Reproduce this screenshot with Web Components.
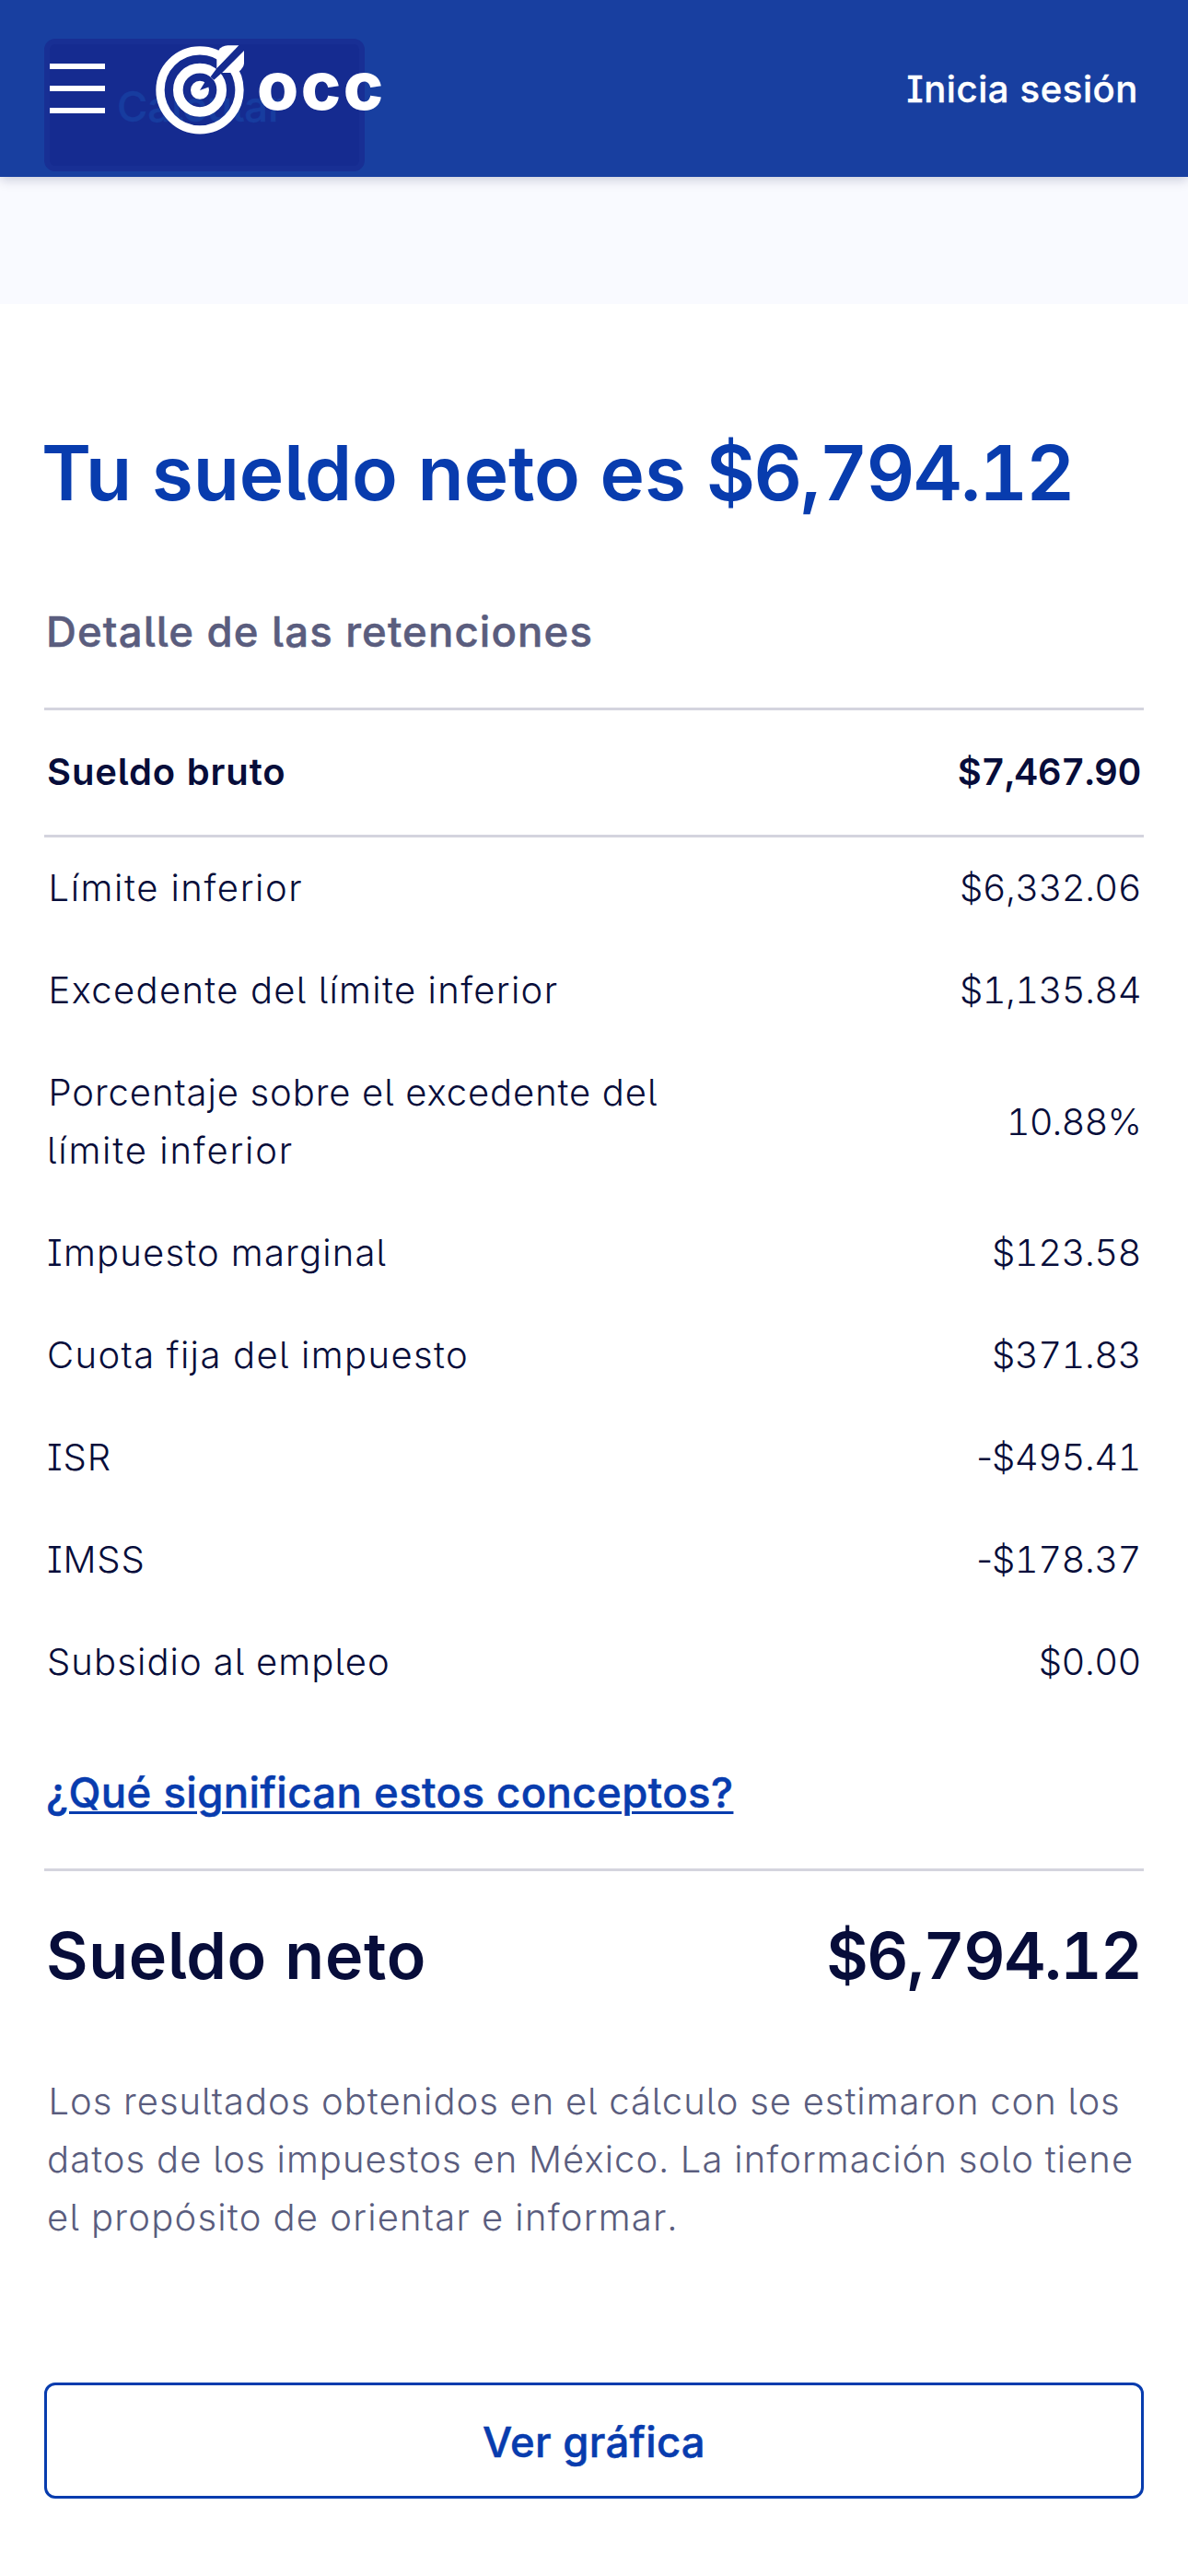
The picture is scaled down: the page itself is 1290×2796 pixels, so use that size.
<!DOCTYPE html>
<html lang="es">
<head>
<meta charset="utf-8">
<title>Calculadora de sueldo neto</title>
<style>
  body { margin: 0; background: #fff; color: #070d3a; font-family: Inter, "Liberation Sans", sans-serif; font-feature-settings: 'cv05', 'cv08', 'tnum'; }
</style>
</head>
<body>
<site-header></site-header>
<salary-page></salary-page>

<script>
const define = (name, html, setup) => customElements.define(name, class extends HTMLElement {
  connectedCallback() {
    if (this.shadowRoot) return;
    this.attachShadow({ mode: 'open' }).innerHTML = html;
    if (setup) setup(this);
  }
});
const applyTracking = el => {
  if (el.hasAttribute('track')) el.style.letterSpacing = el.getAttribute('track') + 'px';
};

define('t-text', `<style>:host{display:inline-block;white-space:nowrap}:host([indent]){padding-left:1.500px}:host([minus])::first-letter{letter-spacing:-5px}</style><slot></slot>`, applyTracking);

define('menu-icon', `<style>:host{display:block;width:60px;height:54px}svg{display:block}</style>
<svg width="60" height="54" fill="#fff"><path d="M0 0h60v6H0zM0 24h60v6H0zM0 48h60v6H0z"/></svg>`);

define('brand-logo', `<style>
  :host{display:flex;align-items:center;color:#fff}
  svg{display:block;margin-top:3px}
  span{font-weight:800;font-size:73px;line-height:80px;letter-spacing:2.6px;margin:-6px 0 0 -1px;white-space:nowrap}
</style>
<svg width="120" height="115" viewBox="0 0 360 345">
  <mask id="m" maskUnits="userSpaceOnUse" x="0" y="0" width="360" height="345">
    <rect width="360" height="345" fill="#fff"/>
    <path fill="#000" d="M298 28 226 103 206 130 217 140 243 117 315 45V20H298zM171 174 188 146 210 160z"/>
  </mask>
  <g mask="url(#m)">
    <g fill="none" stroke="#fff"><circle cx="171" cy="173.500" r="129" stroke-width="28"/><circle cx="171" cy="173.500" r="71" stroke-width="32"/></g>
    <circle cx="171" cy="173.500" r="30" fill="#fff"/>
    <g fill="#fff"><path d="M226 73V104L300 28H262Q242 29 232 44z"/><path d="M315 43 242 117H272L298 113Q314 100 315 86z"/></g>
  </g>
</svg>
<span>occ</span>`);

define('ghost-button', `<style>
  :host{display:flex;align-items:center;box-sizing:border-box;width:348px;height:144px;padding:3px 0 0 73px;border:6px solid #182f94;border-radius:12px;background:#152b90;color:#173c9f;font-size:45.5px;font-weight:500;-webkit-text-stroke:.4px;line-height:60px}
</style><slot></slot>`);

define('site-header', `<style>
  :host{display:flex;align-items:center;position:relative;z-index:1;box-sizing:border-box;height:192px;padding:0 54px;background:#183fa0;box-shadow:0 3px 12px rgba(7,13,58,.2)}
  ghost-button{position:absolute;left:48px;top:42px}
  menu-icon,brand-logo,.login{position:relative}
  brand-logo{margin-left:46px}
  .login{margin-left:auto;padding-top:2px;color:#fff;font-size:40px;font-weight:500;-webkit-text-stroke:.4px;line-height:60px}
</style>
<ghost-button>Calcular</ghost-button>
<menu-icon></menu-icon>
<brand-logo></brand-logo>
<t-text class="login" track="0.6">Inicia sesión</t-text>`);

define('detail-row', `<style>
  :host{display:flex;justify-content:space-between;align-items:center;padding:23px 3px 25px;font-size:40px;font-weight:300;line-height:63px}
  :host([kind=gross]){padding:35px 3px 37px;border:solid #d4d4de;border-width:3px 0;font-weight:600}
  :host([kind=net]){padding:42px 3px 46px 2px;font-size:70px;font-weight:600;line-height:100px}
</style><slot name="label"></slot><slot name="value"></slot>`);

define('outline-button', `<style>
  :host{display:flex;align-items:center;justify-content:center;box-sizing:border-box;height:126px;border:3px solid #083cae;border-radius:12px;color:#083cae;font-size:45.5px;font-weight:500;-webkit-text-stroke:.5px;line-height:60px;padding-top:3px}
</style><slot></slot>`);

define('salary-page', `<style>
  :host{display:block}
  .band{height:138px;background:#f9faff}
  main{padding:134px 48px 84px}
  h1,h2,p{margin:0}
  h1{color:#083cae;font-size:82px;font-weight:600;line-height:100px;margin-left:-3px;letter-spacing:-.15px;white-space:nowrap}
  h1 span{letter-spacing:-1.9px}
  h2{margin:92px 0 52px 2px;color:#5a5d7e;font-size:45.5px;font-weight:500;-webkit-text-stroke:.5px;line-height:60px}
  .link{padding:55.500px 0 52.500px 2px;border-bottom:3px solid #d4d4de;line-height:60px;font-size:45.5px;font-weight:500;-webkit-text-stroke:.5px;color:#083cae}
  .link t-text{text-decoration:underline;text-decoration-thickness:3px;text-underline-offset:4px}
  .note{margin:30px 0 148px 3px;font-size:40px;font-weight:300;line-height:63px;color:#5a5d7e}
  .note t-text{display:block}
</style>
<div class="band"></div>
<main>
  <h1>Tu sueldo neto es <span>$6,794.12</span></h1>
  <h2><t-text track="1.14">Detalle de las retenciones</t-text></h2>
  <detail-row kind="gross"><t-text slot="label" track="0.9">Sueldo bruto</t-text><t-text slot="value" track="-0.4">$7,467.90</t-text></detail-row>
  <detail-row><t-text slot="label" indent track="1.6">Límite inferior</t-text><t-text slot="value" track="-0.55">$6,332.06</t-text></detail-row>
  <detail-row><t-text slot="label" indent track="1.34">Excedente del límite inferior</t-text><t-text slot="value" track="-0.55">$1,135.84</t-text></detail-row>
  <detail-row><span slot="label"><t-text indent track="0.92">Porcentaje sobre el excedente del</t-text><br><t-text track="1.82">límite inferior</t-text></span><t-text slot="value" track="-0.9">10.88%</t-text></detail-row>
  <detail-row><t-text slot="label" track="1.18">Impuesto marginal</t-text><t-text slot="value" track="-0.5">$123.58</t-text></detail-row>
  <detail-row><t-text slot="label" track="1.4">Cuota fija del impuesto</t-text><t-text slot="value" track="-0.5">$371.83</t-text></detail-row>
  <detail-row><t-text slot="label" track="0.8">ISR</t-text><t-text slot="value" minus track="-0.5">-$495.41</t-text></detail-row>
  <detail-row><t-text slot="label" track="0.8">IMSS</t-text><t-text slot="value" minus track="-0.5">-$178.37</t-text></detail-row>
  <detail-row><t-text slot="label" track="1.1">Subsidio al empleo</t-text><t-text slot="value" track="-0.5">$0.00</t-text></detail-row>
  <div class="link"><t-text track="0.42">¿Qué significan estos conceptos?</t-text></div>
  <detail-row kind="net"><t-text slot="label" track="0.7">Sueldo neto</t-text><t-text slot="value" track="-1.45">$6,794.12</t-text></detail-row>
  <p class="note"><t-text indent track="0.98">Los resultados obtenidos en el cálculo se estimaron con los</t-text><t-text track="1.05">datos de los impuestos en México. La información solo tiene</t-text><t-text track="1.22">el propósito de orientar e informar.</t-text></p>
  <outline-button><t-text track="0.25">Ver gráfica</t-text></outline-button>
</main>`);
</script>
</body>
</html>
